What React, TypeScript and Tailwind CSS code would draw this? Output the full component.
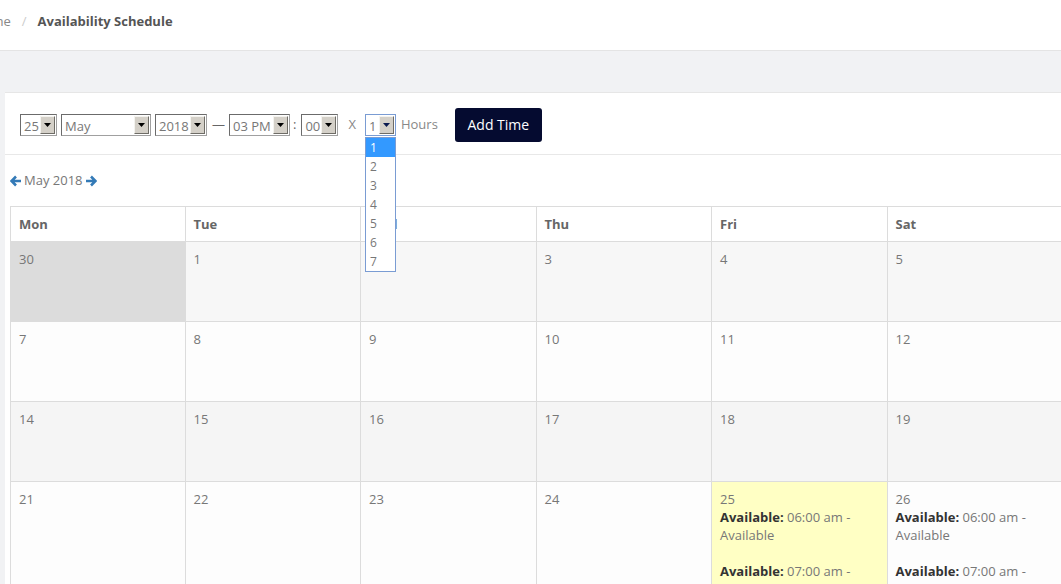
import React from 'react';

function Sel({ value, width, focus = false }: { value: string; width: string; focus?: boolean }) {
  return (
    <div
      className={`flex h-[22px] items-stretch border bg-white ${width} ${
        focus ? 'border-[#7a9cd3]' : 'border-t-[#6b6b6b] border-l-[#6b6b6b] border-b-[#a0a0a0] border-r-[#a0a0a0]'
      }`}
    >
      <span className="flex-1 overflow-hidden whitespace-nowrap pl-[3px] pt-[1px] text-[13px] leading-[20px] text-[#777]">{value}</span>
      <span className="m-[1px] flex w-[15px] items-center justify-center border border-t-[#f4f3ef] border-l-[#f4f3ef] border-b-[#6e6c66] border-r-[#6e6c66] bg-[#d4d0c8]">
        <svg width="7" height="4" viewBox="0 0 7 4">
          <path d="M0 0h7L3.5 4z" fill={focus ? '#0a1a50' : '#000'} />
        </svg>
      </span>
    </div>
  );
}

const days = ['Mon', 'Tue', 'Wed', 'Thu', 'Fri', 'Sat', 'Sun'];

const weeks = [
  { bg: 'bg-[#f7f7f7]', dates: ['30', '1', '2', '3', '4', '5', '6'] },
  { bg: 'bg-[#fdfdfd]', dates: ['7', '8', '9', '10', '11', '12', '13'] },
  { bg: 'bg-[#f5f5f5]', dates: ['14', '15', '16', '17', '18', '19', '20'] },
  { bg: 'bg-[#fdfdfd]', dates: ['21', '22', '23', '24', '25', '26', '27'] },
];

function Slot({ time }: { time: string }) {
  return (
    <div>
      <b className="font-bold text-[#333]">Available:</b> {time} am - Available
    </div>
  );
}

export default function App() {
  return (
    <div className="min-h-[584px] overflow-hidden bg-[#f1f2f4] font-['Open_Sans',sans-serif] text-[13px] text-[#777]">
      {/* Breadcrumb */}
      <div className="flex h-[51px] items-center border-b border-[#e4e4e4] bg-white pb-[6px]">
        <span className="ml-[-26px] text-[#888]">Home</span>
        <span className="mx-[11px] text-[#ccc]">/</span>
        <span className="font-bold text-[#555]">Availability Schedule</span>
      </div>

      <div className="h-[41px]" />

      <div className="relative ml-[5px] border-t border-[#e6e6e6] bg-white">
        {/* Form */}
        <div className="flex h-[62px] items-center border-b border-[#e8e8e8] pl-[15px] pt-[2px]">
          <Sel value="25" width="w-[37px]" />
          <div className="w-[4px]" />
          <Sel value="May" width="w-[90px]" />
          <div className="w-[4px]" />
          <Sel value="2018" width="w-[52px]" />
          <span className="ml-[5px] mr-[4px] text-[#666]">—</span>
          <Sel value="03 PM" width="w-[61px]" />
          <span className="ml-[3px] mr-[5px] text-[#666]">:</span>
          <Sel value="00" width="w-[37px]" />
          <span className="ml-[10px] mr-[9px] text-[#888]">X</span>
          <Sel value="1" width="w-[31px]" focus />
          <span className="ml-[5px] text-[#888]">Hours</span>
          <button className="ml-[17px] h-[34px] w-[87px] rounded-[3px] bg-[#050b30] text-[14px] text-white">Add Time</button>
        </div>

        {/* Dropdown list */}
        <div className="absolute left-[360px] top-[44px] z-10 w-[31px] border border-[#7a9cd3] bg-white">
          {['1', '2', '3', '4', '5', '6', '7'].map((n, i) => (
            <div
              key={n}
              className={`h-[19px] pl-[4px] text-[12px] leading-[19px] ${i === 0 ? 'bg-[#3399ff] text-white' : 'text-[#777]'}`}
            >
              {n}
            </div>
          ))}
        </div>

        {/* Month nav */}
        <div className="flex h-[51px] items-center pl-[5px] text-[13px] text-[#777]">
          <svg width="12" height="12" viewBox="0 0 12 12" className="mr-[2px]">
            <path d="M6 1.5 1.5 6 6 10.5M1.8 6H11" stroke="#337ab7" strokeWidth="2.6" fill="none" />
          </svg>
          <span>May 2018</span>
          <svg width="12" height="12" viewBox="0 0 12 12" className="ml-[2px]">
            <path d="M6 1.5 10.5 6 6 10.5M10.2 6H1" stroke="#337ab7" strokeWidth="2.6" fill="none" />
          </svg>
        </div>

        {/* Calendar */}
        <div className="ml-[5px] grid w-[1229px] grid-cols-[174.5px_repeat(6,175.5px)] border-l border-t border-[#dcdcdc]">
          {days.map((d) => (
            <div key={d} className="h-[35px] border-b border-r border-[#dcdcdc] px-[8px] pt-[8px] font-bold text-[#666]">
              {d}
            </div>
          ))}
          {weeks.map((w, wi) =>
            w.dates.map((dt, di) => {
              const prev = wi === 0 && di === 0;
              const today = wi === 3 && di === 4;
              const bg = prev ? 'bg-[#dcdcdc]' : today ? 'bg-[#ffffc4]' : w.bg;
              const slots = wi === 3 && (di === 4 || di === 5);
              return (
                <div
                  key={`${wi}-${di}`}
                  className={`border-b border-r border-[#dcdcdc] px-[8px] pt-[8px] leading-[18px] ${bg} ${
                    wi === 3 ? 'h-[140px]' : 'h-[80px]'
                  }`}
                >
                  <div>{dt}</div>
                  {slots && (
                    <div className="space-y-[18px]">
                      <Slot time="06:00" />
                      <Slot time="07:00" />
                    </div>
                  )}
                </div>
              );
            })
          )}
        </div>
      </div>
    </div>
  );
}
